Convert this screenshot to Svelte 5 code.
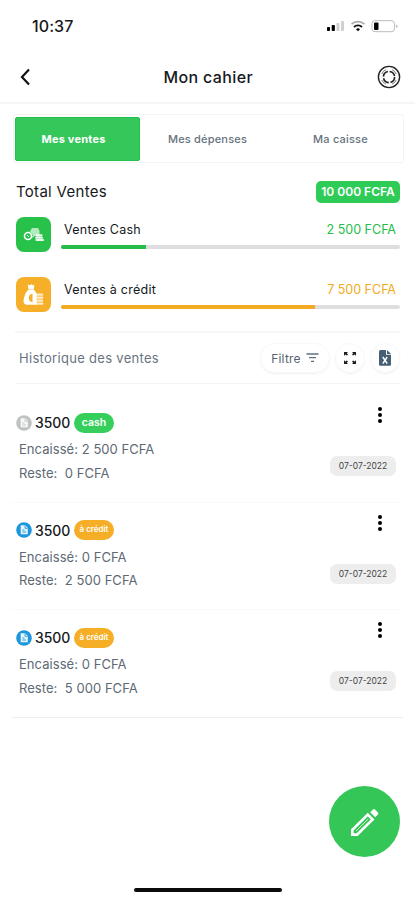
<script>
	const tabs = ['Mes ventes', 'Mes dépenses', 'Ma caisse'];
	let activeTab = $state(0);

	const totals = [
		{ kind: 'cash', label: 'Ventes Cash', amount: '2 500 FCFA', percent: 25 },
		{ kind: 'credit', label: 'Ventes à crédit', amount: '7 500 FCFA', percent: 75 }
	];

	const sales = [
		{ kind: 'cash', label: 'cash', total: '3500', paid: '2 500 FCFA', rest: '0 FCFA', date: '07-07-2022' },
		{ kind: 'credit', label: 'à crédit', total: '3500', paid: '0 FCFA', rest: '2 500 FCFA', date: '07-07-2022' },
		{ kind: 'credit', label: 'à crédit', total: '3500', paid: '0 FCFA', rest: '5 000 FCFA', date: '07-07-2022' }
	];
</script>

<div class="screen">
	<div class="status">
		<span class="clock">10:37</span>
		<svg width="74" height="16" viewBox="0 0 74 16">
			<rect x="1" y="9" width="3" height="4" rx="0.8" />
			<rect x="5.7" y="7" width="3.2" height="6" rx="0.8" />
			<rect x="10.5" y="5" width="3" height="8" rx="0.8" fill="#d0d0d0" />
			<rect x="15" y="3" width="3" height="10" rx="0.8" fill="#d0d0d0" />
			<path d="M25.5 6.2a9.5 9.5 0 0 1 13 0" fill="none" stroke="#aaa" stroke-width="1.7" />
			<path d="M28 9a5.8 5.8 0 0 1 8 0" fill="none" stroke="#111" stroke-width="1.8" />
			<path d="M30 11.2a3 3 0 0 1 4 0l-2 2z" />
			<rect x="46" y="2.7" width="22.5" height="11" rx="3" fill="none" stroke="#bbb" />
			<rect x="48" y="4.5" width="4.5" height="7.5" rx="1" />
			<path d="M70 6.5v3.5q1.5-.6 1.5-1.8t-1.5-1.7z" fill="#bbb" />
		</svg>
	</div>

	<header>
		<button class="plain" aria-label="Retour">
			<svg width="14" height="20" viewBox="0 0 14 20"><path d="M11 2.5 4 10l7 7.5" fill="none" stroke="#111" stroke-width="2.2" /></svg>
		</button>
		<h1>Mon cahier</h1>
		<button class="plain" aria-label="Aide">
			<svg width="24" height="24" viewBox="0 0 24 24" fill="none" stroke="#222">
				<circle cx="12" cy="12" r="10.6" stroke-width="1.4" />
				<circle cx="12" cy="12" r="5.6" stroke-width="1.6" stroke-dasharray="7 1.8" />
				<path d="M4.8 9a8 8 0 0 1 4.2-4.4M15 4.6A8 8 0 0 1 19.2 9M19.2 15a8 8 0 0 1-4.2 4.2M9 19.2A8 8 0 0 1 4.8 15" stroke-width="0.6" />
			</svg>
		</button>
	</header>

	<nav>
		{#each tabs as tab, i}
			<button class="tab" class:active={activeTab === i} onclick={() => (activeTab = i)}>{tab}</button>
		{/each}
	</nav>

	<section class="summary">
		<div class="total">
			<h2>Total Ventes</h2>
			<span class="sum">10 000 FCFA</span>
		</div>
		{#each totals as row}
			<div class="meter {row.kind}">
				<div class="tile">
					{#if row.kind === 'cash'}
						<svg width="22" height="16" viewBox="0 0 22 16" fill="#fff">
							<path d="M7 4.5 9 1h6l1.5 3v4.5H10z" opacity=".65" />
							<circle cx="5" cy="9" r="3.5" fill="none" stroke="#fff" stroke-width="1.6" />
							<path d="m4 8 2 2M8 11l4-3" stroke="#fff" />
							<g opacity=".9">
								<rect x="12.5" y="7.3" width="7" height="2.4" rx="1" />
								<rect x="12" y="9.9" width="8" height="1.9" rx=".8" />
								<rect x="12.5" y="12" width="8.5" height="2" rx=".8" />
							</g>
						</svg>
					{:else}
						<svg width="22" height="24" viewBox="0 0 22 24" fill="#fff">
							<path d="M4.7 1.5 6.7 2.3l1.7-1 1.7 1 1.3-.3-.6 4.4H5.6z" />
							<path fill-rule="evenodd" d="M5.4 6.8h5.4c1.5 1.2 2.3 2.5 2.8 4v10.9H4.2C.4 21.7.1 18.8.9 15.5 1.6 12 3 9 5.4 6.8zM9.5 10.8c-2.5.2-3.7 2-3.7 4.2s1.2 4 3.7 4.2z" />
							<rect x="12" y="10.5" width="8.2" height="2.3" rx="1" opacity=".75" />
							<rect x="12.4" y="13.5" width="8" height="2.3" rx="1" opacity=".75" />
							<rect x="12" y="16.5" width="8.2" height="2.3" rx="1" opacity=".75" />
							<rect x="12.4" y="19.5" width="8" height="2.3" rx="1" opacity=".75" />
						</svg>
					{/if}
				</div>
				<div class="gauge">
					<div class="caption"><span class="label">{row.label}</span><span class="amount">{row.amount}</span></div>
					<div class="track"><div class="fill" style="width: {row.percent}%"></div></div>
				</div>
			</div>
		{/each}
	</section>

	<section class="toolbar">
		<h3>Historique des ventes</h3>
		<button class="pill filter">
			Filtre
			<svg width="13" height="10" viewBox="0 0 13 10"><path d="M.5 1h12M3 4.7h7M5 8.3h3" stroke="#607080" stroke-width="1.3" /></svg>
		</button>
		<button class="pill round" aria-label="Plein écran">
			<svg width="14" height="14" viewBox="0 0 14 14" fill="#1b1f24">
				<path d="M1 1h4L3.8 2.2 5 3.6 3.8 4.6 2.4 3.4 1 4.7zM13 1H9l1.2 1.2L9 3.6l1.2 1 1.4-1.2L13 4.7zM1 13h4l-1.2-1.2L5 10.4l-1.2-1-1.4 1.2L1 9.3zM13 13H9l1.2-1.2L9 10.4l1.2-1 1.4 1.2L13 9.3z" />
			</svg>
		</button>
		<button class="pill round" aria-label="Exporter">
			<svg width="12" height="16" viewBox="0 0 12 16">
				<path d="M1.5 0H7v4.7h5V14.5a1.3 1.3 0 0 1-1.3 1.3H1.3A1.3 1.3 0 0 1 0 14.5v-13A1.5 1.5 0 0 1 1.5 0zM8 0l4 4H8z" fill="#465f75" />
				<path d="m3.8 7 4.4 6.5M8.2 7l-4.4 6.5" stroke="#fff" stroke-width="1.4" />
			</svg>
		</button>
	</section>

	<ul>
		{#each sales as sale}
			<li class={sale.kind}>
				<div class="info">
					<div class="head">
						<svg class="doc" width="16" height="16" viewBox="0 0 16 16">
							<circle cx="8" cy="8" r="7.8" />
							<path d="M4.7 3.2h4.5l2.6 2.8v6.2H4.7z" fill="#fff" fill-opacity=".9" />
							<path d="M9 3.5v2.8h2.5M6.3 8h2.2M6.3 10h3.8" stroke="currentColor" stroke-width=".9" fill="none" />
						</svg>
						<strong>{sale.total}</strong>
						<span class="tag">{sale.label}</span>
					</div>
					<p>Encaissé: {sale.paid}</p>
					<p>Reste: &nbsp;{sale.rest}</p>
				</div>
				<div class="side">
					<button class="plain" aria-label="Options">
						<svg width="6" height="18" viewBox="0 0 6 18"><circle cx="3" cy="3" r="2" /><circle cx="3" cy="9" r="2" /><circle cx="3" cy="15" r="2" /></svg>
					</button>
					<time>{sale.date}</time>
				</div>
			</li>
		{/each}
	</ul>

	<button class="fab" aria-label="Ajouter">
		<svg width="30" height="30" viewBox="0 0 30 30">
			<path d="M2.3 22.9 17.8 7.6l4.8 4.8L7.1 27.7H2.3z" fill="none" stroke="#fff" stroke-width="2.7" />
			<path d="M6 24 18.2 12" stroke="#fff" stroke-width=".8" />
			<path d="m20.2 5.2 2.5-2.5c.8-.8 1.7-.8 2.5 0l2.5 2.5c.8.8.8 1.7 0 2.5L25.2 10.2z" fill="#fff" />
		</svg>
	</button>
	<div class="home"></div>
</div>

<style>
	:global(body) {
		background: #fff;
	}
	.screen {
		position: relative;
		box-sizing: border-box;
		width: 415px;
		height: 900px;
		overflow: hidden;
		background: #fff;
		color: #16191c;
		font-family: Inter, sans-serif;
		display: flex;
		flex-direction: column;
	}
	button {
		font: inherit;
		color: inherit;
		border: 0;
		padding: 0;
		background: none;
		cursor: pointer;
	}
	svg {
		display: block;
	}
	h1,
	h2,
	h3,
	p,
	ul {
		margin: 0;
		padding: 0;
		font-weight: 400;
	}
	.status {
		height: 51px;
		display: flex;
		align-items: center;
		justify-content: space-between;
		padding: 0 15px 0 32px;
	}
	.clock {
		font-size: 16px;
		font-weight: 500;
		letter-spacing: 0.1px;
	}
	header {
		box-sizing: border-box;
		height: 53px;
		display: flex;
		align-items: center;
		justify-content: space-between;
		padding: 0 14.5px 0 18px;
		border-bottom: 2px solid #f5f5f5;
	}
	h1 {
		font-size: 16px;
		font-weight: 500;
		letter-spacing: 0.35px;
		margin-left: 8px;
	}
	nav {
		box-sizing: border-box;
		height: 49px;
		margin: 10px 11px 0 13px;
		padding: 1px;
		border: 1px solid #f3f3f3;
		border-radius: 3px;
		display: grid;
		grid-template-columns: 125px 135px 1fr;
		align-items: center;
	}
	.tab {
		height: 44px;
		font-size: 11px;
		font-weight: 500;
		letter-spacing: 0.2px;
		color: #66727d;
		border-radius: 2px;
	}
	.tab:last-child {
		padding-left: 4px;
	}
	.tab.active {
		color: #fff;
		font-weight: 700;
		padding-right: 8px;
		background: #36c75a;
		border: 1px solid #22c14c;
	}
	.summary {
		box-sizing: border-box;
		height: 168px;
		padding: 17px 15px 0 16px;
	}
	.total {
		height: 23px;
		display: flex;
		align-items: center;
		justify-content: space-between;
	}
	h2 {
		font-size: 15px;
		letter-spacing: 0.3px;
	}
	.sum {
		width: 84px;
		height: 22px;
		line-height: 22px;
		border-radius: 5px;
		background: #2ecc57;
		color: #fff;
		text-align: center;
		font-size: 12px;
		font-weight: 600;
	}
	.meter {
		display: flex;
		gap: 10px;
		height: 60px;
		padding-top: 14px;
		box-sizing: border-box;
	}
	.tile {
		width: 35px;
		height: 35px;
		border-radius: 8px;
		flex: none;
		display: flex;
		align-items: center;
		justify-content: center;
		background: #28c24b;
	}
	.gauge {
		flex: 1;
	}
	.caption {
		height: 28px;
		display: flex;
		justify-content: space-between;
		line-height: 26px;
		padding: 0 4px 0 3px;
		font-size: 12.5px;
	}
	.label {
		letter-spacing: 0.25px;
	}
	.amount {
		color: #24bd49;
	}
	.track {
		height: 4px;
		border-radius: 2px;
		background: #dedede;
		overflow: hidden;
	}
	.fill {
		height: 100%;
		background: #24bd49;
	}
	.credit .tile {
		background: #f5af28;
	}
	.credit .amount {
		color: #f3aa22;
	}
	.credit .fill {
		background: #f3aa22;
	}
	.toolbar {
		box-sizing: border-box;
		height: 53px;
		margin: 0 15px;
		border-top: 2px solid #f7f7f7;
		border-bottom: 1px solid #f3f3f3;
		display: flex;
		align-items: center;
		gap: 5px;
	}
	h3 {
		flex: 1;
		padding-left: 4px;
		font-size: 13px;
		letter-spacing: 0.3px;
		color: #697480;
	}
	.pill {
		box-sizing: border-box;
		height: 30px;
		border-radius: 15px;
		border: 1px solid #f8f8f8;
		box-shadow: 0 1px 2px rgba(0, 0, 0, 0.06);
		display: flex;
		align-items: center;
		justify-content: center;
	}
	.filter {
		width: 70px;
		gap: 5px;
		font-size: 12px;
		letter-spacing: 0.2px;
		color: #566370;
	}
	.round {
		width: 30px;
	}
	ul {
		list-style: none;
		margin: 10px 12px 0;
		border-bottom: 1px solid #eee;
	}
	li {
		box-sizing: border-box;
		height: 107.6px;
		padding: 18px 7px 0 4px;
		display: flex;
		justify-content: space-between;
	}
	li + li {
		border-top: 1px solid #fafafa;
		padding-top: 17px;
	}
	.head {
		display: flex;
		align-items: center;
		height: 21px;
	}
	.doc {
		fill: #bfc1c3;
		color: #bfc1c3;
	}
	.credit .doc {
		fill: #1c97dc;
		color: #1c97dc;
	}
	strong {
		width: 35px;
		margin: 0 4px 0 3px;
		font-size: 14px;
		font-weight: 500;
		letter-spacing: -0.1px;
	}
	.tag {
		width: 40px;
		height: 20px;
		line-height: 19px;
		border-radius: 10px;
		background: #36cf5b;
		color: #fff;
		text-align: center;
		font-size: 10.5px;
		font-weight: 600;
	}
	.credit .tag {
		background: #f5ae25;
		font-size: 8px;
	}
	p {
		height: 23.5px;
		line-height: 23.5px;
		padding-left: 3px;
		font-size: 13px;
		letter-spacing: 0.05px;
		color: #5d6975;
	}
	.head + p {
		margin-top: 5px;
	}
	.side {
		display: flex;
		flex-direction: column;
		align-items: flex-end;
	}
	.side .plain {
		margin: -6px 13px 0 0;
	}
	time {
		width: 66px;
		height: 20px;
		line-height: 20px;
		margin-top: 32px;
		border-radius: 7px;
		background: #ededed;
		text-align: center;
		font-size: 8.5px;
		color: #444;
	}
	.fab {
		position: absolute;
		left: 329px;
		top: 786px;
		width: 71px;
		height: 71px;
		border-radius: 50%;
		background: #35c658;
		display: flex;
		align-items: center;
		justify-content: center;
	}
	.home {
		width: 148px;
		height: 4px;
		border-radius: 2px;
		background: #0b0b0b;
		margin: auto auto 8px 134px;
	}
</style>
